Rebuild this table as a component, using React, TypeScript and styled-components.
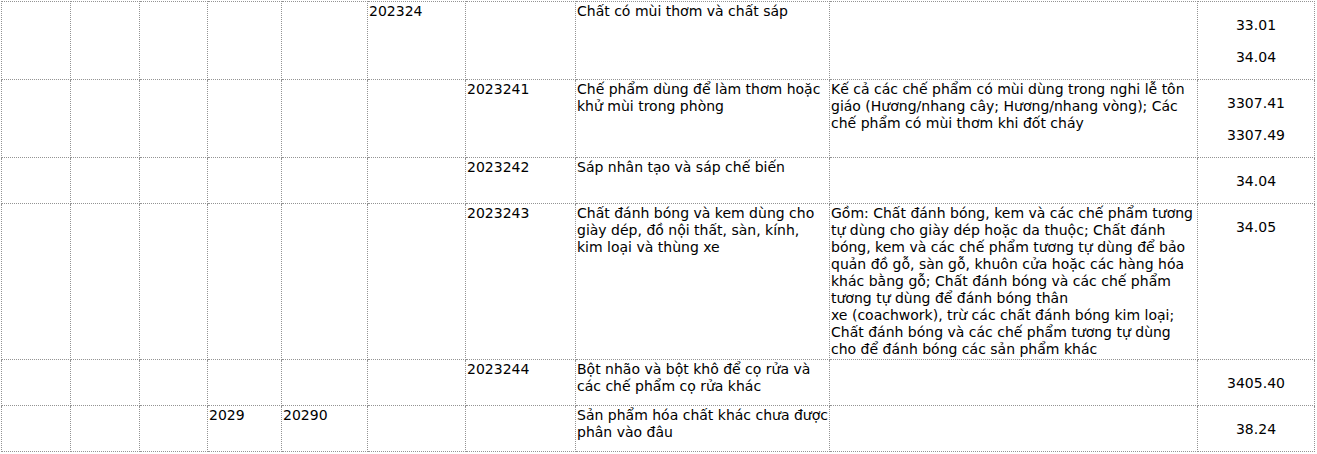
import React from "react";
import styled, { createGlobalStyle } from "styled-components";

const GlobalStyle = createGlobalStyle`
  html, body {
    margin: 0;
    padding: 0;
    background: #fff;
  }
  body {
    padding: 1px 0 0 1px;
    font-family: "DejaVu Sans", Verdana, sans-serif;
    color: #000;
  }
`;

const HsTable = styled.table`
  border-collapse: collapse;
  table-layout: fixed;
  width: 1313px;
  font-size: 14px;
`;

const Cell = styled.td`
  border: 1px dotted #939393;
  padding: 1px;
  vertical-align: top;
  line-height: 17px;
  white-space: pre;
  overflow: hidden;
`;

const CodeCell = styled.td`
  border: 1px dotted #939393;
  padding: 1px;
  vertical-align: top;
  text-align: center;
  line-height: 16px;
`;

const CodeText = styled.p`
  margin: 13.5px 0;
`;

type Row = {
  codes: string[];
  name: string;
  note: string;
  sections: string[];
};

const widths = [69, 69, 68, 74, 86, 98, 110, 254, 368, 117];

const rows: Row[] = [
  {
    codes: ["", "", "", "", "", "202324", ""],
    name: "Chất có mùi thơm và chất sáp",
    note: "",
    sections: ["33.01", "34.04"],
  },
  {
    codes: ["", "", "", "", "", "", "2023241"],
    name: "Chế phẩm dùng để làm thơm hoặc\nkhử mùi trong phòng",
    note: "Kế cả các chế phẩm có mùi dùng trong nghi lễ tôn\ngiáo (Hương/nhang cây; Hương/nhang vòng); Các\nchế phẩm có mùi thơm khi đốt cháy",
    sections: ["3307.41", "3307.49"],
  },
  {
    codes: ["", "", "", "", "", "", "2023242"],
    name: "Sáp nhân tạo và sáp chế biến",
    note: "",
    sections: ["34.04"],
  },
  {
    codes: ["", "", "", "", "", "", "2023243"],
    name: "Chất đánh bóng và kem dùng cho\ngiày dép, đồ nội thất, sàn, kính,\nkim loại và thùng xe",
    note:
      "Gồm: Chất đánh bóng, kem và các chế phẩm tương\ntự dùng cho giày dép hoặc da thuộc; Chất đánh\nbóng, kem và các chế phẩm tương tự dùng để bảo\nquản đồ gỗ, sàn gỗ, khuôn cửa hoặc các hàng hóa\nkhác bằng gỗ; Chất đánh bóng và các chế phẩm\ntương tự dùng để đánh bóng thân\nxe (coachwork), trừ các chất đánh bóng kim loại;\nChất đánh bóng và các chế phẩm tương tự dùng\ncho để đánh bóng các sản phẩm khác",
    sections: ["34.05"],
  },
  {
    codes: ["", "", "", "", "", "", "2023244"],
    name: "Bột nhão và bột khô để cọ rửa và\ncác chế phẩm cọ rửa khác",
    note: "",
    sections: ["3405.40"],
  },
  {
    codes: ["", "", "", "2029", "20290", "", ""],
    name: "Sản phẩm hóa chất khác chưa được\nphân vào đâu",
    note: "",
    sections: ["38.24"],
  },
];

export default function App() {
  return (
    <>
      <GlobalStyle />
      <HsTable>
        <colgroup>
          {widths.map((w, i) => (
            <col key={i} style={{ width: w }} />
          ))}
        </colgroup>
        <tbody>
          {rows.map((row, r) => (
            <tr key={r}>
              {row.codes.map((code, i) => (
                <Cell key={i}>{code}</Cell>
              ))}
              <Cell>{row.name}</Cell>
              <Cell>{row.note}</Cell>
              <CodeCell>
                <CodeText>
                  {row.sections.map((s, i) => (
                    <React.Fragment key={s}>
                      {i > 0 && (
                        <>
                          <br />
                          <br />
                        </>
                      )}
                      {s}
                    </React.Fragment>
                  ))}
                </CodeText>
              </CodeCell>
            </tr>
          ))}
        </tbody>
      </HsTable>
    </>
  );
}
